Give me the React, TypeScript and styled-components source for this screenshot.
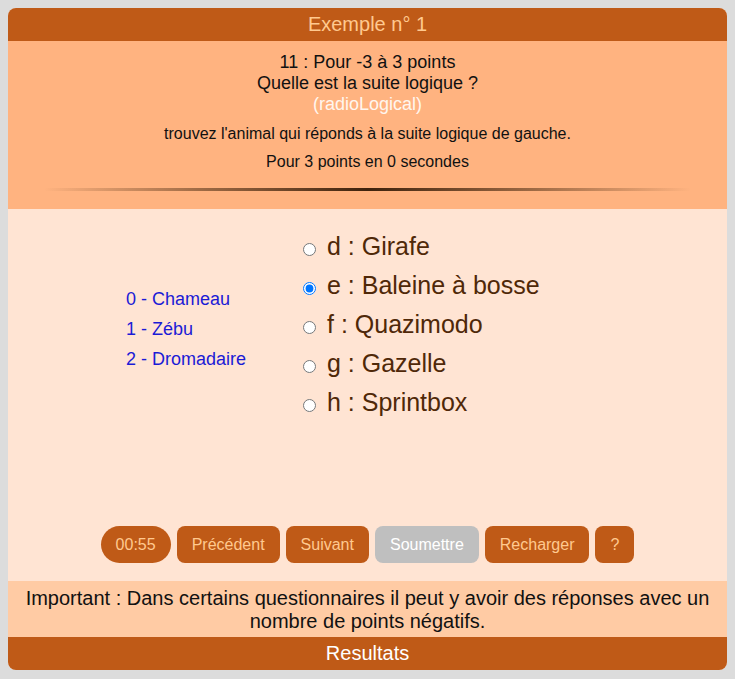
import React from "react";
import styled, { createGlobalStyle } from "styled-components";

const GlobalStyle = createGlobalStyle`
  html, body {
    margin: 0;
    padding: 0;
  }
  body {
    background: #dcdcdc;
    margin: 8px;
    font-family: "Liberation Sans", Arial, sans-serif;
  }
`;

const Card = styled.div`
  border-radius: 8px;
  overflow: hidden;
  background: #ffe4d3;
`;

const Bar = styled.div<{ $light?: boolean }>`
  background: #bf5a17;
  color: ${(p) => (p.$light ? "#ffffff" : "#ffc98f")};
  font-size: 20px;
  height: 33px;
  line-height: 33px;
  text-align: center;
`;

const Question = styled.div`
  background: #ffb380;
  text-align: center;
  padding-top: 11px;
  color: #111;
`;

const Title = styled.div`
  font-size: 18px;
  line-height: 21px;
`;

const TypeTag = styled.div`
  color: #fff6ee;
`;

const Para = styled.p`
  font-size: 16px;
  margin: 10px 0 0;
`;

const Rule = styled.div`
  width: 90%;
  height: 3px;
  margin: 17px auto 0;
  background: linear-gradient(
    to right,
    rgba(74, 42, 16, 0),
    rgba(74, 42, 16, 0.55) 25%,
    #3f220c 50%,
    rgba(74, 42, 16, 0.55) 75%,
    rgba(74, 42, 16, 0)
  );
`;

const Spacer = styled.div`
  height: 18px;
`;

const Answers = styled.div`
  height: 372px;
  box-sizing: border-box;
  padding: 18px 0;
  display: flex;
  flex-direction: column;
  justify-content: space-between;
`;

const Columns = styled.div`
  display: flex;
  align-items: center;
`;

const Sequence = styled.ul`
  list-style: none;
  margin: 0 0 0 118px;
  padding: 9px 0 0;
  width: 172px;
  color: #1b1bd6;
  font-size: 18px;
  line-height: 30px;
`;

const Choices = styled.div`
  display: flex;
  flex-direction: column;
`;

const Choice = styled.label`
  display: flex;
  align-items: center;
  height: 39px;
  font-size: 25px;
  color: #4f2808;
  cursor: pointer;
`;

const Radio = styled.input`
  margin: 5px 11px 0 5px;
  width: 13px;
  height: 13px;
`;

const Toolbar = styled.div`
  display: flex;
  justify-content: center;
  gap: 6px;
`;

const Button = styled.button<{ $pill?: boolean; $disabled?: boolean }>`
  height: 37px;
  padding: 0 15px;
  border: none;
  border-radius: ${(p) => (p.$pill ? "19px" : "8px")};
  background: ${(p) => (p.$disabled ? "#bfbfbf" : "#bf5a17")};
  color: ${(p) => (p.$disabled ? "#ffffff" : "#ffc98f")};
  font-family: "Liberation Sans", Arial, sans-serif;
  font-size: 16px;
  cursor: pointer;
`;

const Notice = styled.div`
  background: #ffcba4;
  color: #111;
  font-size: 20px;
  line-height: 23px;
  text-align: center;
  padding: 6px 10px 4px;
`;

const sequence = ["0 - Chameau", "1 - Zébu", "2 - Dromadaire"];
const choices = [
  { id: "d", label: "d : Girafe" },
  { id: "e", label: "e : Baleine à bosse" },
  { id: "f", label: "f : Quazimodo" },
  { id: "g", label: "g : Gazelle" },
  { id: "h", label: "h : Sprintbox" },
];

export default function App() {
  const [selected, setSelected] = React.useState("e");
  return (
    <>
      <GlobalStyle />
      <Card>
        <Bar>Exemple n° 1</Bar>
        <Question>
          <Title>
            <div>11 : Pour -3 à 3 points</div>
            <div>Quelle est la suite logique ?</div>
            <TypeTag>(radioLogical)</TypeTag>
          </Title>
          <Para>trouvez l'animal qui réponds à la suite logique de gauche.</Para>
          <Para>Pour 3 points en 0 secondes</Para>
          <Rule />
          <Spacer />
        </Question>
        <Answers>
          <Columns>
            <Sequence>
              {sequence.map((s) => (
                <li key={s}>{s}</li>
              ))}
            </Sequence>
            <Choices>
              {choices.map((c) => (
                <Choice key={c.id}>
                  <Radio
                    type="radio"
                    name="answer"
                    checked={selected === c.id}
                    onChange={() => setSelected(c.id)}
                  />
                  {c.label}
                </Choice>
              ))}
            </Choices>
          </Columns>
          <Toolbar>
            <Button $pill>00:55</Button>
            <Button>Précédent</Button>
            <Button>Suivant</Button>
            <Button $disabled>Soumettre</Button>
            <Button>Recharger</Button>
            <Button>?</Button>
          </Toolbar>
        </Answers>
        <Notice>
          Important : Dans certains questionnaires il peut y avoir des réponses avec un nombre de
          points négatifs.
        </Notice>
        <Bar $light>Resultats</Bar>
      </Card>
    </>
  );
}
